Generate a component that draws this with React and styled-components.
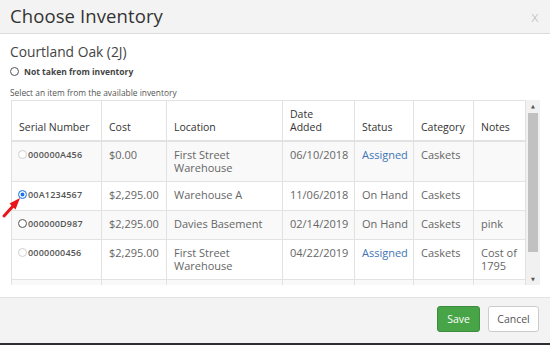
import styled, { createGlobalStyle } from 'styled-components';

const GlobalStyle = createGlobalStyle`
  html, body { margin: 0; padding: 0; background: #fff; }
  body { font-family: "Open Sans", "Liberation Sans", sans-serif; }
  * { box-sizing: border-box; }
`;

const columns = [
  { label: 'Serial Number', width: 90 },
  { label: 'Cost', width: 65 },
  { label: 'Location', width: 116 },
  { label: 'Date Added', width: 72, wrap: true },
  { label: 'Status', width: 59 },
  { label: 'Category', width: 60 },
  { label: 'Notes', width: 52 },
];

const rows = [
  { serial: '000000A456', radio: 'disabled', cost: '$0.00', location: 'First Street Warehouse', date: '06/10/2018', status: 'Assigned', category: 'Caskets', notes: '' },
  { serial: '00A1234567', radio: 'checked', cost: '$2,295.00', location: 'Warehouse A', date: '11/06/2018', status: 'On Hand', category: 'Caskets', notes: '' },
  { serial: '000000D987', radio: 'open', cost: '$2,295.00', location: 'Davies Basement', date: '02/14/2019', status: 'On Hand', category: 'Caskets', notes: 'pink' },
  { serial: '0000000456', radio: 'disabled', cost: '$2,295.00', location: 'First Street Warehouse', date: '04/22/2019', status: 'Assigned', category: 'Caskets', notes: 'Cost of 1795' },
];

export default function App() {
  return (
    <>
      <GlobalStyle />
      <Modal>
        <Header>
          <Title>Choose Inventory</Title>
          <Close>x</Close>
        </Header>
        <Body>
          <ItemName>Courtland Oak (2J)</ItemName>
          <Option>
            <Radio $size={9} $state="open" />
            <span>Not taken from inventory</span>
          </Option>
          <Hint>Select an item from the available inventory</Hint>
          <Scroller>
            <TableArea>
              <Table>
                <colgroup>
                  {columns.map((c) => <col key={c.label} style={{ width: c.width }} />)}
                </colgroup>
                <thead>
                  <tr>
                    {columns.map((c) => (
                      <Th key={c.label}>{c.wrap ? <>Date<br />Added</> : c.label}</Th>
                    ))}
                  </tr>
                </thead>
                <tbody>
                  {rows.map((r, i) => (
                    <Tr key={r.serial} $striped={i % 2 === 0}>
                      <Td>
                        <Serial>
                          <Radio $size={9} $state={r.radio} />
                          {r.serial}
                        </Serial>
                      </Td>
                      <Td>{r.cost}</Td>
                      <Td>{r.location}</Td>
                      <Td>{r.date}</Td>
                      <Td $link={r.status === 'Assigned'}>{r.status}</Td>
                      <Td>{r.category}</Td>
                      <Td>{r.notes}</Td>
                    </Tr>
                  ))}
                  {/* next row, scrolled out of view */}
                  <Tr $striped>
                    {columns.map((c) => <Td key={c.label}><Serial /></Td>)}
                  </Tr>
                </tbody>
              </Table>
            </TableArea>
            <ScrollBar>
              <ScrollArrow>▲</ScrollArrow>
              <Track><Thumb /></Track>
              <ScrollArrow>▼</ScrollArrow>
            </ScrollBar>
          </Scroller>
          <Pointer width="26" height="26" viewBox="0 0 26 26">
            <path d="M3 23 L13 12" stroke="#e8151b" strokeWidth="3" strokeLinecap="round" />
            <path d="M19 5 L8.5 10.5 L14.5 16.5 Z" fill="#e8151b" />
          </Pointer>
        </Body>
        <Footer>
          <Button $primary>Save</Button>
          <Button>Cancel</Button>
        </Footer>
      </Modal>
    </>
  );
}

const Modal = styled.div`
  position: relative;
  width: 550px;
  height: 345px;
  display: flex;
  flex-direction: column;
  background: #fff;
  border-bottom: 2px solid #2b2f33;
`;

const Header = styled.div`
  height: 34px;
  display: flex;
  align-items: center;
  justify-content: space-between;
  padding: 0 11px 1px 10px;
  background: #f3f3f3;
  border-bottom: 1px solid #dcdcdc;
`;

const Title = styled.h1`
  margin: 0;
  font-size: 18.5px;
  font-weight: 400;
  color: #333;
  letter-spacing: 0.1px;
`;

const Close = styled.span`
  font-size: 14px;
  color: #b5b5b5;
  font-family: "DejaVu Sans", sans-serif;
  font-weight: 300;
  margin-top: 2px;
`;

const Body = styled.div`
  flex: 1;
  padding: 9px 10px 12px 10px;
  display: flex;
  flex-direction: column;
`;

const ItemName = styled.div`
  font-size: 13.8px;
  line-height: 18px;
  color: #444;
`;

const Option = styled.label`
  display: flex;
  align-items: center;
  gap: 5px;
  margin-top: 4px;
  height: 14px;
  font-size: 8.5px;
  font-weight: 700;
  color: #444;
`;

const Hint = styled.div`
  margin-top: 8px;
  font-size: 8.4px;
  line-height: 12px;
  color: #555;
`;

const Radio = styled.span`
  flex: none;
  display: inline-block;
  width: ${(p) => p.$size}px;
  height: ${(p) => p.$size}px;
  border-radius: 50%;
  background: #fff;
  border: 1px solid ${(p) => (p.$state === 'disabled' ? '#cfcfcf' : p.$state === 'checked' ? '#1e73e8' : '#555')};
  box-shadow: ${(p) => (p.$state === 'checked' ? 'inset 0 0 0 1.5px #fff, inset 0 0 0 5px #1e73e8' : 'none')};
`;

const Scroller = styled.div`
  display: flex;
  margin: 1px 0 0 1px;
  height: 185px;
  width: 529px;
`;

const TableArea = styled.div`
  width: 515px;
  height: 100%;
  overflow: hidden;
`;

const Table = styled.table`
  width: 515px;
  border-collapse: collapse;
  table-layout: fixed;
  border: 1px solid #e2e2e2;
`;

const Th = styled.th`
  text-align: left;
  vertical-align: bottom;
  font-size: 10.5px;
  font-weight: 400;
  line-height: 13px;
  color: #333;
  padding: 7px 6px 6px 7px;
  height: 40px;
  border: 1px solid #e2e2e2;
  border-bottom-width: 2px;
`;

const Tr = styled.tr`
  background: ${(p) => (p.$striped ? '#f9f9f9' : '#fff')};
`;

const Td = styled.td`
  vertical-align: top;
  font-size: 11px;
  line-height: 13.5px;
  color: ${(p) => (p.$link ? '#3f74b5' : '#666')};
  padding: 6px 5px 6px 7px;
  border: 1px solid #e2e2e2;
`;

const Serial = styled.div`
  display: flex;
  align-items: center;
  gap: 1px;
  height: 20px;
  margin-top: -3px;
  margin-bottom: -1px;
  margin-left: -1px;
  font-size: 9px;
  font-weight: 600;
  color: #555;
  letter-spacing: 0.2px;
`;

const ScrollBar = styled.div`
  width: 14px;
  display: flex;
  flex-direction: column;
  background: #f1f1f1;
`;

const ScrollArrow = styled.div`
  height: 12px;
  font-size: 5px;
  line-height: 12px;
  text-align: center;
  color: #555;
  font-family: "DejaVu Sans", sans-serif;
`;

const Track = styled.div`
  flex: 1;
  padding: 1px 2px 0 2px;
`;

const Thumb = styled.div`
  height: 139px;
  background: #c1c1c1;
`;

const Pointer = styled.svg`
  position: absolute;
  left: 1px;
  top: 193px;
`;

const Footer = styled.div`
  height: 47px;
  display: flex;
  align-items: center;
  justify-content: flex-end;
  gap: 8px;
  padding: 0 11px 3px 0;
  background: #f3f3f3;
  border-top: 1px solid #e3e3e3;
`;

const Button = styled.button`
  height: 26px;
  padding: 0 ${(p) => (p.$primary ? '9px' : '8px')};
  min-width: ${(p) => (p.$primary ? '41px' : '51px')};
  border-radius: 3px;
  font-family: "Open Sans", "Liberation Sans", sans-serif;
  font-size: 10.5px;
  color: ${(p) => (p.$primary ? '#fff' : '#555')};
  background: ${(p) => (p.$primary ? '#47a447' : '#fff')};
  border: 1px solid ${(p) => (p.$primary ? '#3d8b3d' : '#ccc')};
`;
